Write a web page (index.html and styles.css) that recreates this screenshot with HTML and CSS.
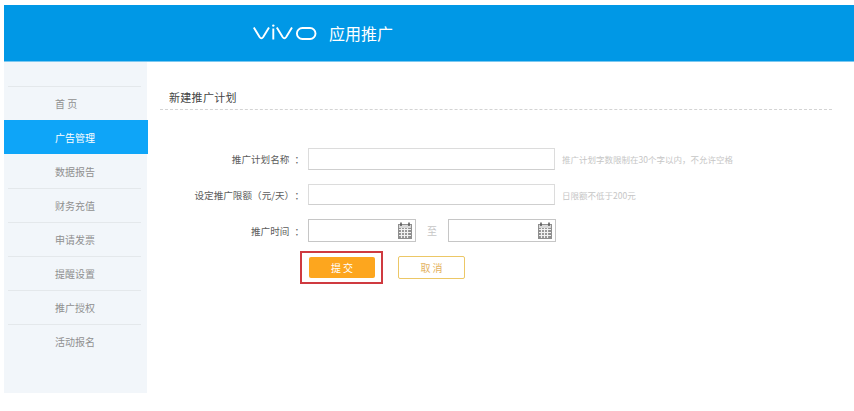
FILE: index.html
```html
<!DOCTYPE html>
<html lang="zh-CN">
<head>
    <meta charset="UTF-8">
    <meta name="viewport" content="width=device-width, initial-scale=1.0">
    <title>vivo 应用推广</title>
    <link rel="stylesheet" href="styles.css">
</head>
<body>
    <header class="top-bar">
        <svg class="logo" width="64" height="18" viewBox="0 0 64 18" aria-label="vivo">
            <path d="M0.8 3.6 L6.6 13 Q8.4 15.6 10.2 13 L16 3.6" />
            <path d="M20.3 4.5 V15.5" />
            <path d="M23.8 3.6 L29.6 13 Q31.4 15.6 33.2 13 L39 3.6" />
            <rect x="43.9" y="4" width="18.6" height="11" rx="5.5" />
            <circle class="logo-dot" cx="20.3" cy="1.6" r="1.2" />
        </svg>
        <span class="top-title">应用推广</span>
    </header>

    <div class="page">
        <nav class="side-nav">
            <a class="nav-item first" href="#"><span>首 页</span></a>
            <a class="nav-item active" href="#"><span>广告管理</span></a>
            <a class="nav-item" href="#"><span>数据报告</span></a>
            <a class="nav-item" href="#"><span>财务充值</span></a>
            <a class="nav-item" href="#"><span>申请发票</span></a>
            <a class="nav-item" href="#"><span>提醒设置</span></a>
            <a class="nav-item" href="#"><span>推广授权</span></a>
            <a class="nav-item last" href="#"><span>活动报名</span></a>
        </nav>

        <main class="content">
            <h2 class="page-title">新建推广计划</h2>

            <form class="plan-form">
                <div class="form-row">
                    <label class="form-label" for="plan-name">推广计划名称<span class="colon">：</span></label>
                    <input class="text-input" type="text" id="plan-name">
                    <span class="hint">推广计划字数限制在30个字以内，不允许空格</span>
                </div>
                <div class="form-row row-budget">
                    <label class="form-label" for="plan-budget">设定推广限额（元/天）<span class="colon">：</span></label>
                    <input class="text-input" type="text" id="plan-budget">
                    <span class="hint">日限额不低于200元</span>
                </div>
                <div class="form-row row-time">
                    <label class="form-label" for="plan-start">推广时间<span class="colon">：</span></label>
                    <div class="date-field">
                        <input type="text" id="plan-start">
                        <svg class="cal-icon" width="14" height="17" viewBox="0 0 14 17">
                            <rect x="0" y="2" width="14" height="15" fill="#8f8f8f" />
                            <rect x="1" y="3" width="12" height="3" fill="#d8d8d8" />
                            <path d="M3 0.5 V4 M11 0.5 V4" stroke="#555" stroke-width="1.5" />
                            <path d="M1 7.5 H13 M1 10.5 H13 M1 13.5 H13 M3.5 6 V16 M6.5 6 V16 M9.5 6 V16" stroke="#f1f1f1" stroke-width="1.2" />
                        </svg>
                    </div>
                    <span class="date-sep">至</span>
                    <div class="date-field">
                        <input type="text" id="plan-end" aria-label="结束时间">
                        <svg class="cal-icon" width="14" height="17" viewBox="0 0 14 17">
                            <rect x="0" y="2" width="14" height="15" fill="#8f8f8f" />
                            <rect x="1" y="3" width="12" height="3" fill="#d8d8d8" />
                            <path d="M3 0.5 V4 M11 0.5 V4" stroke="#555" stroke-width="1.5" />
                            <path d="M1 7.5 H13 M1 10.5 H13 M1 13.5 H13 M3.5 6 V16 M6.5 6 V16 M9.5 6 V16" stroke="#f1f1f1" stroke-width="1.2" />
                        </svg>
                    </div>
                </div>
                <div class="form-actions">
                    <div class="highlight-box">
                        <button class="btn btn-submit" type="submit">提 交</button>
                    </div>
                    <button class="btn btn-cancel" type="button">取 消</button>
                </div>
            </form>
        </main>
    </div>
</body>
</html>
```

FILE: styles.css
```css
/* Theme colours */
:root {
    --blue: #0098e6;
    --blue-active: #0ea5f8;
    --side-bg: #f2f6fa;
    --line: #e4e8eb;
    --text: #5c5c5c;
    --text-muted: #909090;
    --text-hint: #c6c6c6;
    --orange: #fda61e;
    --gold: #ecc766;
}

* {
    box-sizing: border-box;
    margin: 0;
    padding: 0;
}

body {
    margin: 5px 0 0 4px;
    background: #fff;
    font-family: "Noto Sans CJK SC", "Liberation Sans", sans-serif;
    font-size: 10px;
    color: var(--text);
    overflow: hidden;
}

/* Header */
.top-bar {
    display: flex;
    align-items: center;
    height: 57px;
    padding-left: 249px;
    background: var(--blue);
    border-bottom: 1px solid #7cc8f0;
}

.logo {
    fill: none;
    stroke: #fff;
    stroke-width: 1.9;
}

.logo-dot {
    fill: #fff;
    stroke: none;
}

.top-title {
    margin-left: 12px;
    font-size: 16px;
    color: #fff;
}

.page {
    display: flex;
}

/* Sidebar */
.side-nav {
    flex: none;
    width: 143px;
    height: 331px;
    padding-top: 24px;
    background: var(--side-bg);
}

.nav-item {
    display: block;
    height: 34px;
    padding: 0 6px 0 4px;
    color: var(--text-muted);
    text-decoration: none;
}

.nav-item span {
    display: block;
    height: 34px;
    padding-left: 47px;
    line-height: 33px;
    border-bottom: 1px solid var(--line);
}

.nav-item.first span {
    border-top: 1px solid var(--line);
    border-bottom: 0;
}

.nav-item.last span {
    border-bottom: 0;
}

.nav-item.active {
    margin: 0 -1px 1px 0;
    background: var(--blue-active);
    color: #fff;
}

.nav-item.active span {
    line-height: 35px;
    border-bottom: 0;
}

/* Main column */
.content {
    flex: 1;
    padding: 24px 22px 0 13px;
}

.page-title {
    height: 24px;
    padding-left: 9px;
    font-size: 11px;
    font-weight: 400;
    letter-spacing: 0.3px;
    line-height: 22px;
    color: #444;
    border-bottom: 1px dashed #d4d4d4;
}

.plan-form {
    margin: 38px 0 0 -13px;
}

.form-row {
    display: flex;
    align-items: center;
    height: 22px;
}

.row-budget {
    height: 21px;
    margin-top: 14px;
}

.row-time {
    height: 23px;
    margin-top: 14px;
}

.form-label {
    flex: none;
    width: 157px;
    margin-right: 4px;
    font-size: 9.6px;
    text-align: right;
}

.colon {
    margin-left: 5px;
}

.text-input {
    flex: none;
    width: 247px;
    height: 100%;
    border: 1px solid #dcdcdc;
    border-bottom-color: #cfcfcf;
    outline: none;
}

.hint {
    margin-left: 7px;
    font-size: 8.5px;
    color: var(--text-hint);
}

.date-field {
    display: flex;
    align-items: center;
    flex: none;
    width: 108px;
    height: 100%;
    padding-right: 3px;
    border: 1px solid #c6c6c6;
}

.date-field input {
    flex: 1;
    min-width: 0;
    height: 100%;
    border: 0;
    outline: none;
}

.cal-icon {
    flex: none;
}

.date-sep {
    flex: none;
    width: 32px;
    text-align: center;
    color: var(--text-hint);
}

/* Buttons */
.form-actions {
    display: flex;
    align-items: center;
    gap: 15px;
    margin: 9px 0 0 153px;
}

.highlight-box {
    padding: 4px 6px 4px 7px;
    border: 2px solid #cf3a40;
}

.btn {
    display: block;
    height: 21px;
    width: 66px;
    font-family: inherit;
    font-size: 10px;
    border-radius: 2px;
    cursor: pointer;
}

.btn-submit {
    border: 0;
    background: var(--orange);
    color: #fff;
}

.btn-cancel {
    width: 67px;
    height: 23px;
    border: 1px solid var(--gold);
    background: #fff;
    color: #e3b25d;
}
```
